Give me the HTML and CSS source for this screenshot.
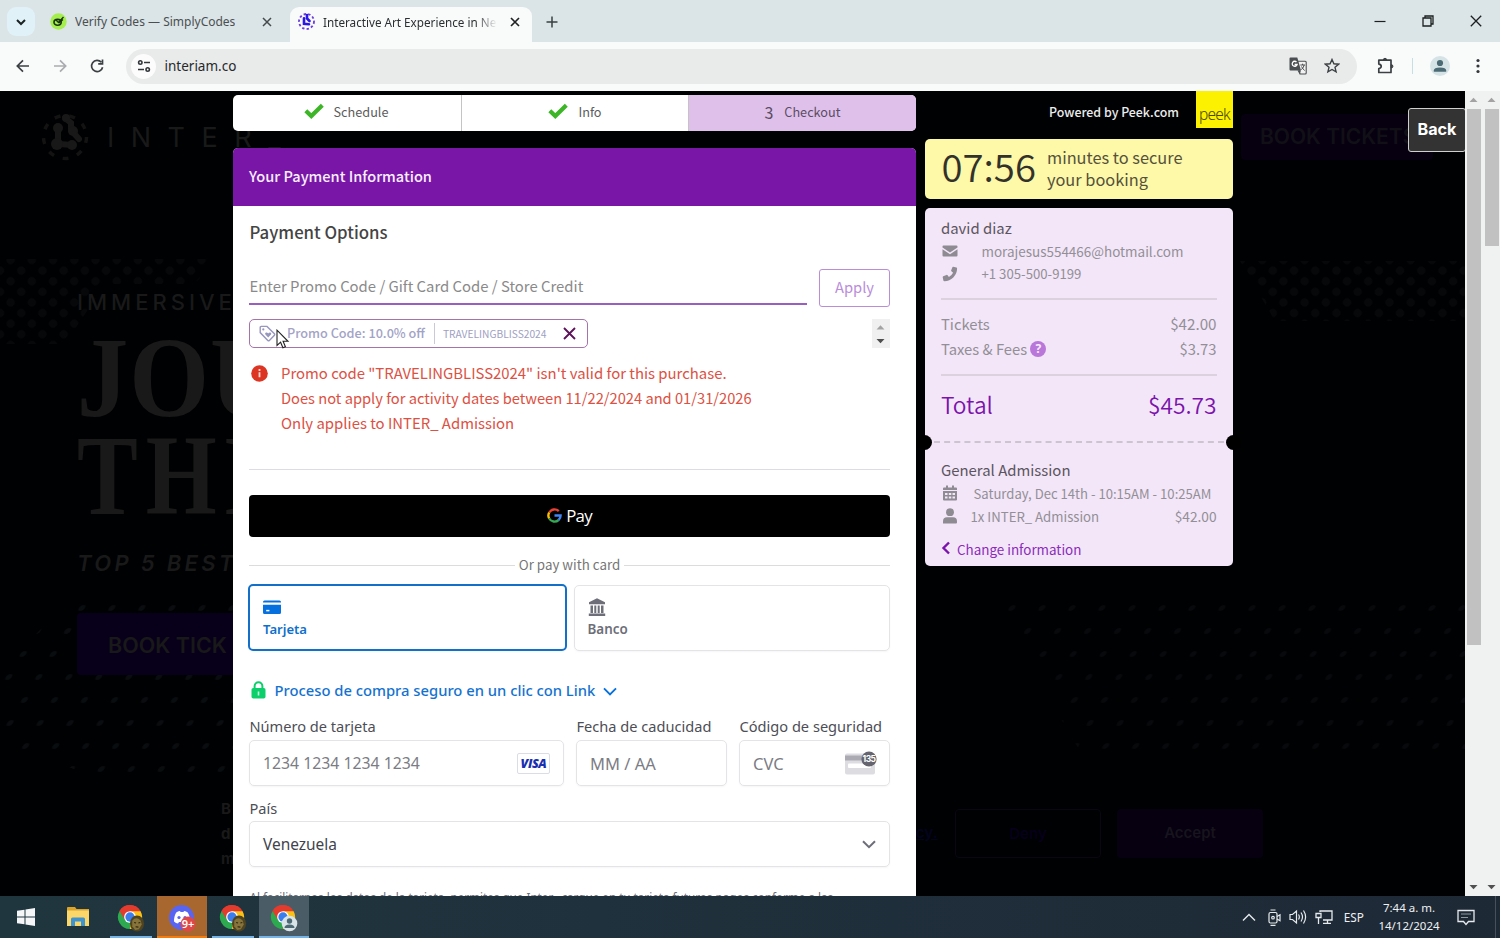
FILE: index.html
```
<!DOCTYPE html>
<html lang="en">
<head>
  <meta charset="UTF-8" />
  <meta name="viewport" content="width=device-width, initial-scale=1.0" />
  <title>Interactive Art Experience in New York</title>
  <link rel="stylesheet" href="styles.css">
</head>
<body>
  <!-- shared icons -->
  <svg width="0" height="0" class="defs">
    <symbol id="check" viewBox="0 0 20 16">
      <path d="M1.800 7.800 7.300 13 18.300 2.200" fill="none" stroke="#3cb526" stroke-width="4.200" />
    </symbol>
    <symbol id="chrome" viewBox="0 0 28 28">
      <path d="M14 14 2.740 7.500A13 13 0 0 1 25.260 7.500z" fill="#e33b2e" />
      <path d="M14 14V1M25.260 7.500A13 13 0 0 1 14 27L14 14 14 7.500z" fill="#fbc116" />
      <path d="M14 14 14 27A13 13 0 0 1 2.740 7.500z" fill="#2da94f" />
      <path d="M14 7.700H25.260A13 13 0 0 0 2.740 7.500L8.500 17z" fill="#e33b2e" />
      <circle cx="14" cy="14" r="6.300" fill="#fff" />
      <circle cx="14" cy="14" r="5" fill="#3b7ded" />
    </symbol>
    <symbol id="avatar" viewBox="0 0 16 18">
      <ellipse cx="8" cy="9" rx="7.500" ry="8.500" fill="#4f4420" />
      <path d="M3 6q4-5 9 0l1 4-3 5-4 1-3-4z" fill="#86743a" />
      <path d="M5 8l2 .5M9.500 8.500l2-.5M6.500 12.500l3 .3" stroke="#2b2412" stroke-width="1.200" />
    </symbol>
  </svg>

  <div class="tabstrip">
    <button class="tab-search">
      <svg width="12" height="8" viewBox="0 0 12 8"><path d="M2 2l4 4 4-4" fill="none" stroke="#1c2224" stroke-width="2" /></svg>
    </button>
    <div class="tab">
      <svg class="favicon" width="17" height="17" viewBox="0 0 17 17">
        <circle cx="8.500" cy="8.500" r="8.200" fill="#a4ee4d" />
        <ellipse cx="7.600" cy="9.300" rx="3.600" ry="2.900" fill="none" stroke="#17330e" stroke-width="1.600" />
        <path d="M6 7l2.500 2.500 5-5.500M9 10l4-3.500" fill="none" stroke="#17330e" stroke-width="1.300" />
      </svg>
      <span class="tab-title">Verify Codes — SimplyCodes</span>
      <svg class="close" width="10" height="10" viewBox="0 0 10 10"><path d="M1 1l8 8M9 1l-8 8" stroke="#454b4d" stroke-width="1.500" /></svg>
    </div>
    <div class="tab active">
      <svg class="favicon" width="17" height="17" viewBox="0 0 17 17">
        <circle cx="8.500" cy="8.500" r="7.500" fill="none" stroke="#6a3be0" stroke-width="1.800" stroke-dasharray="2.400 2.200" />
        <path d="M6 5.200v5.600l5 .4M9 2v3.500l2.500 2.500" fill="none" stroke="#2a16e6" stroke-width="2.600" stroke-linecap="round" />
      </svg>
      <span class="tab-title">Interactive Art Experience in Ne</span>
      <svg class="close" width="10" height="10" viewBox="0 0 10 10"><path d="M1 1l8 8M9 1l-8 8" stroke="#202324" stroke-width="1.700" /></svg>
    </div>
    <button class="new-tab">
      <svg width="12" height="12" viewBox="0 0 12 12"><path d="M6 .5v11M.5 6h11" stroke="#3a4042" stroke-width="1.500" /></svg>
    </button>
    <div class="window-controls">
      <svg width="12" height="12" viewBox="0 0 12 12"><path d="M.5 6.500h11" stroke="#1c1f20" stroke-width="1.200" /></svg>
      <svg width="12" height="12" viewBox="0 0 12 12"><path d="M3 3V1h8v8H9M1 3h8v8H1z" fill="none" stroke="#1c1f20" stroke-width="1.300" /></svg>
      <svg width="12" height="12" viewBox="0 0 12 12"><path d="M.8.800l10.400 10.400M11.200.800L.8 11.200" stroke="#1c1f20" stroke-width="1.300" /></svg>
    </div>
  </div>

  <div class="toolbar">
    <svg class="nav" width="16" height="16" viewBox="0 0 16 16"><path d="M14 8H2.500M8 2.300 2.300 8 8 13.700" fill="none" stroke="#3c4043" stroke-width="1.700" /></svg>
    <svg class="nav" width="16" height="16" viewBox="0 0 16 16"><path d="M2 8h11.500M8 2.300 13.700 8 8 13.700" fill="none" stroke="#a9acae" stroke-width="1.700" /></svg>
    <svg class="nav" width="16" height="16" viewBox="0 0 16 16"><path d="M13.600 9.200A5.600 5.600 0 1 1 12.300 4.200M13.500 1.500v4.300H9.200" fill="none" stroke="#3c4043" stroke-width="1.700" /></svg>
    <div class="omnibox">
      <div class="site-info">
        <svg width="14" height="14" viewBox="0 0 14 14"><g fill="none" stroke="#34383a" stroke-width="1.600"><circle cx="3.300" cy="3.500" r="1.700" /><path d="M7 3.500h6M1 10.500h6" /><circle cx="10.700" cy="10.500" r="1.700" /></g></svg>
      </div>
      <span class="url">interiam.co</span>
      <svg class="translate" width="18" height="18" viewBox="0 0 18 18">
        <path d="M8 4.200h8.200a1 1 0 0 1 1 1V16a1 1 0 0 1-1 1H11L8 5z" fill="#f2f2f2" stroke="#4b4f51" stroke-width="1.100" />
        <path d="M1.500.500h6.800l3.700 13H1.500a1 1 0 0 1-1-1v-11a1 1 0 0 1 1-1z" fill="#4b4f51" />
        <path d="M8.500 13.500H12L10.500 17z" fill="#4b4f51" />
        <path d="M7.500 5a2.500 2.500 0 1 0 .6 2.500H5.600" fill="none" stroke="#fff" stroke-width="1.300" />
        <path d="M11.300 8h4.700M13.600 6.700V8M15.200 8q-.6 3-3.200 4.800M12.500 9.500q1.200 2.500 3.200 4" fill="none" stroke="#4b4f51" />
      </svg>
      <svg class="star" width="16" height="16" viewBox="0 0 16 16"><path d="M8 1.500l1.900 4.300 4.700.4-3.600 3.100 1.100 4.600L8 11.500l-4.100 2.400L5 9.300 1.400 6.200l4.700-.4z" fill="none" stroke="#3c4043" stroke-width="1.400" /></svg>
    </div>
    <svg class="puzzle" width="18" height="18" viewBox="0 0 18 18"><path d="M1.800 3.200h12.200v12.300H1.800v-4q2.400-.3 2.400-2.200t-2.400-2.200z" fill="none" stroke="#3c4043" stroke-width="1.700" stroke-linejoin="round" /><path d="M6.300 3a1.700 1.700 0 0 1 3.400 0zM14.200 7.600a1.700 1.700 0 0 1 0 3.400z" fill="#3c4043" stroke="#3c4043" /></svg>
    <div class="divider"></div>
    <svg class="profile" width="20" height="20" viewBox="0 0 20 20"><circle cx="10" cy="10" r="10" fill="#d6e3e6" /><circle cx="10" cy="7" r="3.100" fill="#4c6a74" /><path d="M3.800 15.700v-1.200q0-3 6.200-3t6.200 3v1.200z" fill="#4c6a74" /></svg>
    <svg class="menu" width="4" height="16" viewBox="0 0 4 16"><g fill="#33373a"><circle cx="2" cy="2.500" r="1.600" /><circle cx="2" cy="8" r="1.600" /><circle cx="2" cy="13.500" r="1.600" /></g></svg>
  </div>

  <main class="viewport">
    <!-- dimmed site behind the booking dialog -->
    <div class="site">
      <svg class="dots" width="1465" height="805" viewBox="0 0 1465 805">
        <defs>
          <pattern id="dotgrid" width="30" height="23" patternUnits="userSpaceOnUse" patternTransform="skewX(-32)"><circle cx="15" cy="11" r="2.800" fill="#0a0d10" /></pattern>
          <pattern id="dotgrid2" width="15" height="15" patternUnits="userSpaceOnUse" patternTransform="rotate(45)"><circle cx="7" cy="7" r="4" fill="#06080a" /></pattern>
        </defs>
        <path d="M80 498h153v190H100L0 650v-70z" fill="url(#dotgrid)" />
        <path d="M0 168h215l-20 25h-90l-40 60H0z" fill="url(#dotgrid2)" />
        <path d="M985 500h480v160H1080z" fill="url(#dotgrid)" opacity=".7" />
        <path d="M1240 170h225v60h-190z" fill="url(#dotgrid2)" />
      </svg>
      <div class="site-logo">
        <svg width="48" height="48" viewBox="0 0 48 48">
          <circle cx="24" cy="24" r="21.500" fill="none" stroke="#131313" stroke-width="3.500" stroke-dasharray="6 9" />
          <path d="M17 14v17l15 1M24 5l6 5v7l8 9" fill="none" stroke="#181818" stroke-width="6" stroke-linecap="round" />
          <g fill="#181818"><circle cx="17" cy="15" r="5" /><circle cx="16" cy="31" r="6" /><circle cx="31" cy="32" r="5" /><circle cx="32" cy="18" r="5" /><circle cx="25" cy="5" r="4" /></g>
        </svg>
        <span>INTER_</span>
      </div>
      <div class="site-book">BOOK TICKETS</div>
      <div class="hero">
        <div class="kicker">IMMERSIVE</div>
        <div class="headline">JOU</div>
        <div class="headline second">THE</div>
        <div class="award">TOP 5 BEST</div>
        <div class="cta">BOOK TICK</div>
      </div>
      <div class="cookies">
        <p>B<br>d<br>m</p>
        <span class="policy">policy.</span>
        <div class="deny">Deny</div>
        <div class="accept">Accept</div>
      </div>
    </div>

    <div class="booking">
      <section class="left">
        <div class="steps">
          <div class="step"><svg width="20" height="16"><use href="#check" /></svg>Schedule</div>
          <div class="step"><svg width="20" height="16"><use href="#check" /></svg>Info</div>
          <div class="step current"><b>3</b>Checkout</div>
        </div>
        <div class="panel">
          <h2 class="panel-head">Your Payment Information</h2>
          <div class="panel-body">
            <h3>Payment Options</h3>
            <div class="promo-row">
              <div class="promo-input">Enter Promo Code / Gift Card Code / Store Credit</div>
              <button class="apply">Apply</button>
            </div>
            <div class="chip-row">
              <div class="chip">
                <svg width="17" height="17" viewBox="0 0 17 17"><path d="M1.200 2.400v5.200l7.600 7.900q.8.700 1.600 0l5-5.200q.6-.8 0-1.500L8 1.400H2.200q-1 0-1 1z" fill="none" stroke="#9796bf" stroke-width="1.400" /><circle cx="4.300" cy="4.400" r="1.100" fill="#9796bf" /><path d="M9.200 12.500 6.400 9.600q-.9-1.600.6-2.100 1.400-.2 2.200 1 .8-1.200 2.200-1 1.500.5.600 2.100z" fill="#9796bf" /></svg>
                <span class="chip-name">Promo Code: 10.0% off</span>
                <span class="chip-code">TRAVELINGBLISS2024</span>
                <svg class="chip-x" width="13" height="13" viewBox="0 0 13 13"><path d="M1 1l11 11M12 1L1 12" stroke="#5c1458" stroke-width="1.900" /></svg>
              </div>
              <div class="spinner">
                <svg width="17" height="29" viewBox="0 0 17 29"><path d="M4.500 10.500h8l-4-4.300z" fill="#a3a3a3" /><path d="M4.500 20h8l-4 4.300z" fill="#4d4d4d" /></svg>
              </div>
            </div>
            <div class="error">
              <svg width="17" height="17" viewBox="0 0 17 17"><circle cx="8.500" cy="8.500" r="8.300" fill="#dd3524" /><path d="M8.500 4v1.900M8.500 7.200v5" stroke="#ffd9d3" stroke-width="1.800" /></svg>
              <p>Promo code "TRAVELINGBLISS2024" isn't valid for this purchase.<br><span class="tight">Does not apply for activity dates between 11/22/2024 and 01/31/2026</span><br>Only applies to INTER_ Admission</p>
            </div>
            <button class="gpay">
              <svg width="15" height="15" viewBox="0 0 15 15"><g fill="none" stroke-width="2.400"><path d="M2.200 4.500A6.100 6.100 0 0 1 11.800 3.200" stroke="#ea4335" /><path d="M2.200 10.500a6.100 6.100 0 0 1 0-6" stroke="#fbbc04" /><path d="M11.600 12a6.100 6.100 0 0 1-9.400-1.500" stroke="#34a853" /><path d="M7.500 7.500h6.100A6.100 6.100 0 0 1 11.600 12" stroke="#4285f4" /></g></svg>
              <span>Pay</span>
            </button>
            <div class="or"><span>Or pay with card</span></div>
            <div class="methods">
              <div class="method selected">
                <svg width="18" height="18" viewBox="0 0 18 18"><path d="M0 4.500V4q0-1.500 1.500-1.500h15Q18 2.500 18 4v.5zM0 6.700h18v7.800q0 1.500-1.500 1.500h-15Q0 16 0 14.500z" fill="#0570de" /><path d="M3.200 12.600h3.200" stroke="#fff" stroke-width="1.500" /></svg>
                <span>Tarjeta</span>
              </div>
              <div class="method">
                <svg width="18" height="18" viewBox="0 0 18 18"><path d="M9 .300l8 4v2H1v-2zM2.500 7.500h2.500V15H2.500zM6.300 7.500h2v7.500h-2zM9.700 7.500h2v7.500h-2zM13 7.500h2.500V15H13zM.8 15.500h16.400V18H.8z" fill="#6d6e78" /></svg>
                <span>Banco</span>
              </div>
            </div>
            <div class="link">
              <svg width="15" height="18" viewBox="0 0 15 18"><rect x=".5" y="7" width="14" height="10.500" rx="1.800" fill="#0bcf6a" /><path d="M3.600 8V5.200a3.900 3.900 0 0 1 7.800 0V8" fill="none" stroke="#0bcf6a" stroke-width="2" /><path d="M7.500 10.500v4" stroke="#c9f7de" stroke-width="1.600" /></svg>
              <span>Proceso de compra seguro en un clic con Link</span>
              <svg class="down" width="14" height="9" viewBox="0 0 14 9"><path d="M1 1.300l6 6 6-6" fill="none" stroke="#0570de" stroke-width="1.900" /></svg>
            </div>
            <div class="card-fields">
              <div class="field number">
                <label>Número de tarjeta</label>
                <div class="box">1234 1234 1234 1234<b class="visa">VISA</b></div>
              </div>
              <div class="field expiry">
                <label>Fecha de caducidad</label>
                <div class="box wide">MM / AA</div>
              </div>
              <div class="field cvc">
                <label>Código de seguridad</label>
                <div class="box wide">CVC
                  <svg width="32" height="24" viewBox="0 0 32 24"><rect y="2.500" width="30" height="21" rx="2" fill="#dddde1" /><path d="M0 4.500h30v5H0z" fill="#abaab2" /><rect x="3" y="12.500" width="23" height="4.500" rx="1" fill="#fff" /><circle cx="24" cy="8" r="7.600" fill="#66656f" /><text x="24" y="11" class="cvc-num">135</text></svg>
                </div>
              </div>
            </div>
            <div class="field country">
              <label>País</label>
              <div class="box select">Venezuela
                <svg width="14" height="9" viewBox="0 0 14 9"><path d="M1 1.200l6 6 6-6" fill="none" stroke="#6d6e78" stroke-width="2" /></svg>
              </div>
            </div>
            <p class="terms">Al facilitarnos los datos de la tarjeta, permites que Inter_ cargue en tu tarjeta futuros pagos conforme a las</p>
          </div>
        </div>
      </section>

      <aside class="right">
        <div class="powered"><span>Powered by Peek.com</span><div class="peek">peek</div></div>
        <div class="timer"><span class="clock">07:56</span><span>minutes to secure<br>your booking</span></div>
        <div class="ticket">
          <div class="who">
            <h4>david diaz</h4>
            <div class="contact"><svg width="16" height="16" viewBox="0 0 16 16"><path d="M.5 3.500q0-1 1-1h13q1 0 1 1v1L8 9.500.500 4.500zM.5 6.200 8 11.200l7.500-5v6.300q0 1-1 1h-13q-1 0-1-1z" fill="#8e8b92" /></svg>morajesus554466@hotmail.com</div>
            <div class="contact phone"><svg width="16" height="16" viewBox="0 0 16 16"><path d="M11.200.800l3.200.8q.7.200.7 1A12.800 12.800 0 0 1 2.400 15.200q-.8 0-1-.7l-.7-3.200q-.1-.7.500-1l3.300-1.400q.6-.2 1.100.3l1.300 1.700a10 10 0 0 0 4.200-4.200L9.400 5.300q-.5-.5-.2-1.100l1.200-2.900q.3-.6.8-.5z" fill="#8e8b92" /></svg>+1 305-500-9199</div>
          </div>
          <div class="costs">
            <div class="line"><span>Tickets</span><span class="amount">$42.00</span></div>
            <div class="line"><span>Taxes &amp; Fees <i class="help">?</i></span><span>$3.73</span></div>
          </div>
          <div class="total"><span>Total</span><span>$45.73</span></div>
          <div class="tear"></div>
          <div class="item">
            <h4>General Admission</h4>
            <div class="detail when"><svg width="14" height="16" viewBox="0 0 14 16"><path d="M0 3.500q0-1 1-1h12q1 0 1 1V5H0zM3 .500h2v3H3zM9 .500h2v3H9zM0 6h14v8.500q0 1-1 1H1q-1 0-1-1z" fill="#8e8b92" /><path d="M2 8h2.500v2H2zM5.800 8h2.500v2H5.800zM9.500 8H12v2H9.500zM2 11.500h2.500v2H2zM5.800 11.500h2.500v2H5.800zM9.500 11.500H12v2H9.500z" fill="#f3e6f8" /></svg><span>Saturday, Dec 14th - 10:15AM - 10:25AM</span></div>
            <div class="detail guest"><svg width="14" height="16" viewBox="0 0 14 16"><circle cx="7" cy="4.200" r="3.900" fill="#8e8b92" /><path d="M0 15.500v-2q0-4.200 4-4.200h6q4 0 4 4.200v1q0 1-1 1z" fill="#8e8b92" /></svg><span>1x INTER_ Admission</span><span class="price">$42.00</span></div>
            <a class="change"><svg width="10" height="14" viewBox="0 0 10 14"><path d="M8 1.500 2.500 7 8 12.500" fill="none" stroke="#7b14ac" stroke-width="2.400" /></svg>Change information</a>
          </div>
        </div>
      </aside>
    </div>

    <button class="back">Back</button>
    <div class="scrollbar frame">
      <svg width="17" height="17" viewBox="0 0 17 17"><path d="M4.500 11h8l-4-4.200z" fill="#a3a3a3" /></svg>
      <div class="thumb long"></div>
      <svg width="17" height="17" viewBox="0 0 17 17"><path d="M4.500 6h8l-4 4.200z" fill="#505050" /></svg>
    </div>
    <div class="scrollbar">
      <svg width="17" height="17" viewBox="0 0 17 17"><path d="M4.500 11h8l-4-4.200z" fill="#a3a3a3" /></svg>
      <div class="thumb short"></div>
      <svg width="17" height="17" viewBox="0 0 17 17"><path d="M4.500 6h8l-4 4.200z" fill="#505050" /></svg>
    </div>
  </main>

  <svg class="cursor" width="14" height="21" viewBox="0 0 14 21"><path d="M1 1.200v15.300l3.600-3.300 2.300 5.600 2.500-1-2.300-5.500h4.900z" fill="#fff" stroke="#222" stroke-width="1.100" /></svg>

  <footer class="taskbar">
    <div class="task start"><svg width="18" height="18" viewBox="0 0 18 18"><path d="M0 2.800 7.500 1.700V8.500H0zM8.500 1.500 18 0v8.500H8.500zM0 9.500h7.500v6.800L0 15.300zM8.500 9.500H18V18l-9.500-1.400z" fill="#f4f6f7" /></svg></div>
    <div class="task"><svg width="24" height="20" viewBox="0 0 24 20"><path d="M1 1q0-1 1-1h7l1.500 2H23v17H1z" fill="#dca42b" /><path d="M1 3.500h22V19H1z" fill="#fbd669" /><path d="M5 19v-7q0-1.500 1.500-1.500h11Q19 10.500 19 12v7h-4v-4.500H9V19z" fill="#3f93cf" /></svg></div>
    <div class="task open"><svg width="28" height="28" viewBox="0 0 28 28"><use href="#chrome" width="26" height="26" /><use href="#avatar" x="12" y="11" width="16" height="17" /></svg></div>
    <div class="task alert"><svg width="28" height="28" viewBox="0 0 28 28"><circle cx="13.500" cy="13.500" r="12.500" fill="#5865f2" /><path d="M6 17.500q0-6 2.500-9.200Q11 7 12 7l.5 1h3l.5-1q1 0 3.500 1.300Q22 11.500 22 17.500q-2 2-4 2l-1-1.500h-6l-1 1.500q-2 0-4-2z" fill="#fff" /><circle cx="11" cy="13.500" r="1.600" fill="#5865f2" /><circle cx="17" cy="13.500" r="1.600" fill="#5865f2" /><circle cx="20" cy="20" r="7.500" fill="#e04848" /><text x="20" y="24" class="badge-num">9+</text></svg></div>
    <div class="task open"><svg width="28" height="28" viewBox="0 0 28 28"><use href="#chrome" width="26" height="26" /><use href="#avatar" x="12" y="11" width="16" height="17" /></svg></div>
    <div class="task focused"><svg width="28" height="28" viewBox="0 0 28 28"><use href="#chrome" width="26" height="26" /><circle cx="19.500" cy="19.500" r="7.800" fill="#d8e4e8" /><circle cx="19.500" cy="17" r="2.700" fill="#4c6a74" /><path d="M14.500 24q0-3.500 5-3.500t5 3.500z" fill="#4c6a74" /></svg></div>
    <div class="tray">
      <svg width="14" height="9" viewBox="0 0 14 9"><path d="M1 7.500l6-6 6 6" fill="none" stroke="#e6eaec" stroke-width="1.400" /></svg>
      <svg width="13" height="17" viewBox="0 0 13 17"><g fill="none" stroke="#e6eaec" stroke-width="1.200"><rect x="1" y="3.500" width="8" height="10.500" rx="1.500" /><path d="M9 7.500l3-1.700v6L9 10M2.500 1h5M2.500 16.300h5" /><circle cx="5" cy="8.700" r="1.300" /></g></svg>
      <svg width="18" height="16" viewBox="0 0 18 16"><g fill="none" stroke="#e6eaec" stroke-width="1.200"><path d="M1 5.500h2.500L7.500 2v12L3.500 10.500H1zM9.500 5.500q1.700 2.500 0 5M12 3.500q3 4.500 0 9M14.500 1.500q4.200 6.500 0 13" /></g></svg>
      <svg width="18" height="16" viewBox="0 0 18 16"><g fill="none" stroke="#e6eaec" stroke-width="1.300"><path d="M5 3V2h12v9H8M12.500 11v3M8 14.300h8M1 4.500h5v4H1zM3.500 8.500v6.500" /></g></svg>
      <span class="lang">ESP</span>
      <div class="time">7:44 a. m.<br>14/12/2024</div>
      <svg width="18" height="17" viewBox="0 0 18 17"><path d="M1 1.500h16v11h-5.500L9 15.500l-2.500-3H1z" fill="none" stroke="#e6eaec" stroke-width="1.300" /><path d="M4 5h10M4 8.500h7" stroke="#8d999f" /></svg>
    </div>
  </footer>
</body>
</html>
```
FILE: styles.css
```
* {
  box-sizing: border-box;
}
html, body {
  height: 100%;
  margin: 0;
}
body {
  display: flex;
  flex-direction: column;
  width: 1500px;
  height: 938px;
  overflow: hidden;
  font-family: "Noto Sans", sans-serif;
  background: #000;
}
h2, h3, h4, p {
  margin: 0;
  font-weight: 400;
}
button {
  font-family: inherit;
  padding: 0;
  border: 0;
  background: none;
}
svg {
  flex: none;
  display: block;
}
.defs {
  position: absolute;
}

/* browser chrome */
.tabstrip {
  display: flex;
  flex: none;
  align-items: flex-end;
  height: 42px;
  padding-left: 7px;
  background: #dbe4e6;
}
.tab-search {
  display: flex;
  align-items: center;
  justify-content: center;
  width: 28px;
  height: 29px;
  margin: 0 6px 6px 0;
  border-radius: 9px;
  background: #e0f2f8;
}
.tab {
  display: flex;
  align-items: center;
  width: 249px;
  height: 35px;
  padding: 0 18px 6px 9px;
  font-size: 12px;
  color: #4a5052;
}
.tab .close {
  margin-left: auto;
}
.favicon {
  margin-right: 8px;
}
.tab-title {
  overflow: hidden;
  white-space: nowrap;
}
.tab.active {
  width: 242px;
  padding: 0 12px 6px 8px;
  border-radius: 9px 9px 0 0;
  background: #f9fafa;
  font-size: 11.7px;
  color: #2b2f31;
}
.tab.active .tab-title {
  width: 174px;
  -webkit-mask-image: linear-gradient(to right, #000 88%, transparent);
  mask-image: linear-gradient(to right, #000 88%, transparent);
}
.new-tab {
  margin: 0 0 14px 14px;
}
.window-controls {
  display: flex;
  gap: 36px;
  margin: 0 18px 15px auto;
}
.toolbar {
  display: flex;
  flex: none;
  align-items: center;
  height: 49px;
  padding: 0 20px 1px 16px;
  background: #f9fafa;
}
.nav {
  margin: 0 22px 0 -1px;
}
.omnibox {
  display: flex;
  align-items: center;
  width: 1231px;
  height: 35px;
  margin-left: -1px;
  padding: 0 17px 0 5px;
  border-radius: 18px;
  background: #e9eaea;
}
.site-info {
  display: flex;
  align-items: center;
  justify-content: center;
  width: 25px;
  height: 25px;
  border-radius: 50%;
  background: #fcfcfc;
}
.url {
  margin-left: 8.500px;
  font-size: 13.500px;
  color: #26292b;
}
.translate {
  margin-left: auto;
}
.star {
  margin-left: 17px;
}
.puzzle {
  margin-left: 20px;
}
.divider {
  width: 1px;
  height: 16px;
  margin: 0 17px;
  background: #c9dde2;
}
.menu {
  margin-left: auto;
}

/* page area */
.viewport {
  display: flex;
  flex: none;
  position: relative;
  height: 805px;
  overflow: hidden;
  background: #000103;
}
.site {
  position: absolute;
  inset: 0;
  color: #191919;
  font-family: Inter, sans-serif;
}
.dots {
  position: absolute;
  inset: 0;
}
.site-logo {
  position: absolute;
  left: 41px;
  top: 22px;
  display: flex;
  align-items: center;
  gap: 18px;
  font-size: 27px;
  letter-spacing: 16.500px;
}
.site-book {
  position: absolute;
  left: 1241px;
  top: 23px;
  width: 192px;
  height: 46px;
  padding-left: 19px;
  border-radius: 4px;
  background: #060010;
  font-size: 21px;
  font-weight: 600;
  line-height: 46px;
  white-space: nowrap;
  color: #121017;
}
.hero {
  position: absolute;
  left: 77px;
  top: 198px;
  width: 156px;
  overflow: hidden;
  white-space: nowrap;
}
.kicker {
  font-size: 22px;
  font-weight: 500;
  letter-spacing: 4px;
  line-height: 26px;
}
.headline {
  margin-top: 13px;
  font-family: "Liberation Serif", serif;
  font-weight: 700;
  font-size: 114px;
  line-height: 100px;
  letter-spacing: 1px;
  transform: scaleX(.9);
  transform-origin: left;
}
.headline.second {
  margin-top: -2px;
  letter-spacing: 10px;
  transform: scaleX(.8);
}
.award {
  margin-top: 23px;
  font-size: 22px;
  font-weight: 600;
  font-style: italic;
  letter-spacing: 3.300px;
  line-height: 28px;
}
.cta {
  height: 62px;
  margin-top: 36px;
  padding-left: 31px;
  border-radius: 4px 0 0 4px;
  background: #08001a;
  font-size: 21.500px;
  font-weight: 600;
  line-height: 64px;
}
.cookies {
  position: absolute;
  left: 221px;
  top: 705px;
  display: flex;
  font-size: 15px;
  font-weight: 700;
  line-height: 25px;
}
.cookies p {
  width: 12px;
  overflow: hidden;
  font-weight: 700;
}
.policy {
  width: 66px;
  margin: 24px 0 0 656px;
  color: #03031c;
  text-decoration: underline;
}
.deny, .accept {
  width: 146px;
  height: 49px;
  margin-top: 13px;
  border: 1px solid #0a0612;
  border-radius: 4px;
  line-height: 47px;
  text-align: center;
  font-weight: 600;
  color: #06001a;
}
.accept {
  margin-left: 16px;
  border: 0;
  background: #060010;
  color: #17141d;
}

/* booking dialog */
.booking {
  display: flex;
  position: relative;
  width: 1000px;
  height: 805px;
  margin-left: 233px;
  font-family: "Noto Sans CJK SC", sans-serif;
}
.left {
  width: 683px;
  padding-top: 4px;
}
.steps {
  display: flex;
  height: 36px;
  border-radius: 5px;
  overflow: hidden;
  background: #fff;
}
.step {
  display: flex;
  align-items: center;
  justify-content: center;
  width: 227px;
  padding-bottom: 3px;
  border-right: 1px solid #c4c4c4;
  font-size: 12.700px;
  color: #5c5c5c;
}
.step:first-child {
  width: 229px;
}
.step:first-child svg {
  margin-left: -2px;
}
.step svg {
  margin: -2px 10px 0 0;
}
.step.current {
  border: 0;
  background: #dec0eb;
  color: #5b4d63;
}
.step b {
  margin-right: 11px;
  font-size: 16px;
  font-weight: 400;
}
.panel {
  margin-top: 16.500px;
  border-radius: 5px 5px 0 0;
  overflow: hidden;
  background: #fff;
}
.panel-head {
  height: 58.500px;
  padding-left: 16px;
  background: #7916a7;
  font-size: 14.570px;
  font-weight: 500;
  line-height: 55px;
  color: #f9effd;
}
.panel-body {
  height: 700px;
  padding: 12px 26px 0 16px;
}
.panel-body h3 {
  padding-left: .5px;
  font-size: 16.750px;
  font-weight: 500;
  line-height: 29px;
  color: #444;
}
.promo-row {
  display: flex;
  justify-content: space-between;
  margin-top: 22px;
}
.promo-input {
  width: 558px;
  height: 36px;
  border-bottom: 2px solid #9a5fbe;
  padding-left: .5px;
  font-size: 14.870px;
  line-height: 34px;
  color: #8a8a8a;
}
.apply {
  width: 71px;
  height: 38px;
  padding-bottom: 3px;
  border: 1px solid #bb8dd8;
  border-radius: 3px;
  font-size: 14.700px;
  color: #ba8ddb;
}
.chip-row {
  display: flex;
  justify-content: space-between;
  margin-top: 12px;
}
.chip {
  display: flex;
  align-items: center;
  width: 339px;
  height: 29px;
  padding-left: 9px;
  border: 1px solid #a672aa;
  border-radius: 5px;
}
.chip-name {
  height: 21px;
  margin-left: 11px;
  padding-right: 9px;
  border-right: 1px solid #c9c9da;
  font-size: 12.680px;
  font-weight: 500;
  line-height: 20px;
  color: #a3a3c6;
}
.chip-code {
  margin: -1px 0 0 8px;
  font-size: 10.220px;
  color: #a0a0c2;
}
.chip-x {
  margin-left: 17px;
}
.spinner {
  width: 18px;
  height: 29px;
  background: #f0f0f0;
}
.error {
  display: flex;
  height: 122px;
  padding: 12px 0 0 2px;
  border-bottom: 1px solid #dcdce2;
  font-size: 14.900px;
  line-height: 25px;
  white-space: nowrap;
  color: #dc5143;
}
.error p {
  margin-top: -.5px;
}
.error svg {
  margin: 4.500px 13px 0 0;
}
.tight {
  font-size: 14.680px;
}
.gpay {
  display: flex;
  align-items: center;
  justify-content: center;
  width: 641px;
  height: 42px;
  margin-top: 25px;
  padding-bottom: 2px;
  border-radius: 4px;
  background: #000;
  font-family: "Open Sans", sans-serif;
  font-size: 16.800px;
  font-weight: 500;
  letter-spacing: -.7px;
  color: #fff;
}
.gpay svg {
  margin-right: 4px;
}
.or {
  display: flex;
  align-items: center;
  height: 24px;
  margin: 16px 0 7px;
  font-size: 13.340px;
  color: #767676;
}
.or::before, .or::after {
  content: "";
  flex: 1;
  height: 1px;
  background: #dcdcdc;
}
.or span {
  margin: -2px 4px 0;
}
.methods {
  display: flex;
  gap: 7px;
  margin-left: -1px;
  font-family: "Noto Sans", sans-serif;
}
.method {
  width: 316px;
  height: 66px;
  margin-top: 1px;
  padding: 12px 12.500px 0;
  border: 1px solid #e4e4e7;
  border-radius: 5px;
  box-shadow: 0 1px 2px rgba(0, 0, 0, .04);
  font-size: 13.400px;
  font-weight: 600;
  line-height: 26px;
  color: #6d6e78;
}
.method.selected {
  width: 319px;
  height: 67px;
  padding-left: 13px;
  margin-top: 0;
  border: 2px solid #1270c9;
  font-size: 13.070px;
  color: #0f6fcc;
}
.link {
  display: flex;
  align-items: center;
  height: 24px;
  margin-top: 27px;
  padding-left: 1.500px;
  font-family: "Noto Sans", sans-serif;
  font-size: 14.780px;
  font-weight: 500;
  white-space: nowrap;
  color: #1472cf;
}
.link span {
  margin: 0 8px 0 9px;
}
.link .down {
  margin-top: 3px;
}
.card-fields {
  display: flex;
  gap: 12px;
  margin-top: 14px;
}
.field {
  width: 151px;
  font-family: "Noto Sans", sans-serif;
}
.field.number {
  width: 315px;
}
.field.country {
  width: 641px;
  margin-top: 12px;
}
.field label {
  display: block;
  padding-left: .5px;
  font-size: 14.600px;
  line-height: 20px;
  white-space: nowrap;
  color: #4d4e56;
}
.box {
  display: flex;
  align-items: center;
  justify-content: space-between;
  height: 46px;
  margin-top: 4px;
  padding: 0 13px;
  border: 1px solid #e4e4e7;
  border-radius: 5px;
  box-shadow: 0 1px 2px rgba(0, 0, 0, .04);
  font-size: 15.810px;
  color: #7b7c84;
}
.box.wide {
  padding-right: 12px;
  font-size: 16.500px;
}
.box.select {
  margin-top: 3px;
  padding-right: 13px;
  font-size: 15.460px;
  color: #42434a;
}
.visa {
  width: 33px;
  height: 21px;
  border: 1px solid #dcdce4;
  border-radius: 2px;
  font: italic 800 12.500px/20px "Open Sans", sans-serif;
  letter-spacing: -.4px;
  text-align: center;
  color: #1a2fb0;
}
.cvc-num {
  font: 700 8.500px Inter, sans-serif;
  letter-spacing: -.6px;
  text-anchor: middle;
  fill: #fff;
}
.terms {
  margin-top: 22px;
  padding-left: .5px;
  font-family: "Noto Sans", sans-serif;
  font-size: 11.680px;
  line-height: 17px;
  white-space: nowrap;
  color: #6d6e78;
}

/* order summary */
.right {
  width: 308.500px;
  margin-left: 8.500px;
}
.powered {
  display: flex;
  justify-content: flex-end;
  height: 37px;
  gap: 17px;
  font-size: 12.380px;
  font-weight: 500;
  line-height: 42px;
  color: #ececec;
}
.peek {
  width: 37px;
  height: 37px;
  background: #fbf100;
  font-family: "Noto Sans", sans-serif;
  font-size: 15.500px;
  font-weight: 300;
  line-height: 46px;
  letter-spacing: -.8px;
  text-align: center;
  color: #4a4600;
}
.timer {
  display: flex;
  height: 60px;
  margin-top: 11px;
  padding-left: 17px;
  border-radius: 5px;
  background: #fef8a9;
  font-size: 16.350px;
  line-height: 22px;
  color: #55523a;
}
.timer span {
  padding-top: 7px;
}
.timer .clock {
  width: 105.500px;
  padding: 0;
  font-size: 38.300px;
  font-weight: 350;
  line-height: 54px;
  color: #33322a;
}
.ticket {
  height: 358px;
  margin-top: 9px;
  padding: 0 16.500px;
  border-radius: 5px;
  background: #f3e6f8;
  color: #928f96;
}
.ticket h4 {
  font-size: 14.900px;
  line-height: 24px;
  color: #5b5560;
}
.who {
  height: 92px;
  padding-top: 8px;
  border-bottom: 2px solid #dbd2de;
}
.contact {
  display: flex;
  align-items: center;
  height: 23px;
  margin-top: -1px;
  padding-left: 1px;
  font-size: 13.460px;
}
.contact.phone {
  margin-top: 0;
  font-size: 13.200px;
}
.contact svg {
  margin: 1px 23.500px 0 0;
}
.costs {
  height: 76px;
  padding-top: 10.500px;
  border-bottom: 2px solid #dbd2de;
  font-size: 14.800px;
}
.line {
  display: flex;
  justify-content: space-between;
  line-height: 25px;
}
.amount {
  font-size: 15.200px;
}
.help {
  display: inline-block;
  width: 16px;
  height: 16px;
  margin-top: -3px;
  border-radius: 50%;
  vertical-align: middle;
  background: #b977da;
  font: 700 12px/16px "Noto Sans", sans-serif;
  text-align: center;
  color: #f8ecff;
}
.total {
  display: flex;
  justify-content: space-between;
  height: 65px;
  font-size: 22.700px;
  font-weight: 350;
  line-height: 57px;
  color: #7b14ac;
}
.tear {
  position: relative;
  margin: 0 -7px;
  border-top: 2px dashed #ccc4cf;
}
.tear::before, .tear::after {
  content: "";
  position: absolute;
  top: -8.500px;
  left: -17px;
  width: 15px;
  height: 15px;
  border-radius: 50%;
  background: #000;
}
.tear::after {
  left: auto;
  right: -17px;
}
.item {
  padding-top: 14.500px;
}
.detail {
  display: flex;
  align-items: center;
  height: 23px;
  padding-left: 2px;
  font-size: 13.200px;
  white-space: nowrap;
}
.when span {
  margin-left: 16.500px;
  font-size: 13.100px;
}
.guest span {
  margin-left: 13.500px;
}
.detail .price {
  margin-left: auto;
  font-size: 13.700px;
}
.change {
  display: flex;
  align-items: center;
  margin-top: 11px;
  font-size: 13.420px;
  line-height: 20px;
  color: #8b2bbb;
}
.change svg {
  margin: -1px 6px 0 0;
}

.back {
  position: absolute;
  left: 1408px;
  top: 17px;
  width: 58px;
  height: 44px;
  padding-bottom: 2px;
  border: 1px solid #cfcfcf;
  border-radius: 3px;
  background: #333;
  font-family: Inter, sans-serif;
  font-size: 16.200px;
  font-weight: 700;
  color: #fff;
}
.scrollbar {
  display: flex;
  flex-direction: column;
  position: relative;
  width: 17px;
  background: #f0f1f1;
}
.scrollbar.frame {
  width: 18px;
  margin-left: auto;
}
.thumb {
  width: 14px;
  margin: 1px 0 auto 2px;
  background: #c1c1c1;
}
.thumb.long {
  height: 536px;
}
.thumb.short {
  height: 137px;
}
.cursor {
  position: absolute;
  left: 276px;
  top: 329px;
}

/* taskbar */
.taskbar {
  display: flex;
  flex: none;
  height: 42px;
  background: linear-gradient(to right, #20363f, #1f313c 40%, #1e2936);
}
.task {
  display: flex;
  align-items: center;
  justify-content: center;
  width: 50px;
  margin-right: 1px;
}
.task.start {
  width: 51px;
}
.task.start + .task {
  width: 52px;
  margin-right: 2px;
}
.task.open {
  padding-top: 2px;
  background: linear-gradient(#76b4e8, #76b4e8) 50% 100% / 42px 2px no-repeat;
}
.task.alert {
  padding-top: 3px;
  border-bottom: 2px solid #f57c0c;
  background: #a8672f;
}
.task.focused {
  padding-top: 4px;
  border-bottom: 2px solid #76b4e8;
  background: #4a5d66;
}
.badge-num {
  font: 600 11px "Noto Sans", sans-serif;
  text-anchor: middle;
  fill: #fff;
}
.tray {
  display: flex;
  align-items: center;
  margin: 0 4px 0 auto;
  padding-right: 20px;
  border-right: 1px solid #45505a;
  font-size: 11.800px;
  color: #eef1f2;
}
.tray svg {
  margin-right: 12px;
}
.tray svg + svg {
  margin-right: 8px;
}
.lang {
  margin-left: 3px;
}
.time {
  width: 62px;
  margin: 0 17px 0 14px;
  font-size: 11.470px;
  line-height: 18px;
  text-align: center;
}
.tray svg:last-child {
  margin-right: 0;
}
```
